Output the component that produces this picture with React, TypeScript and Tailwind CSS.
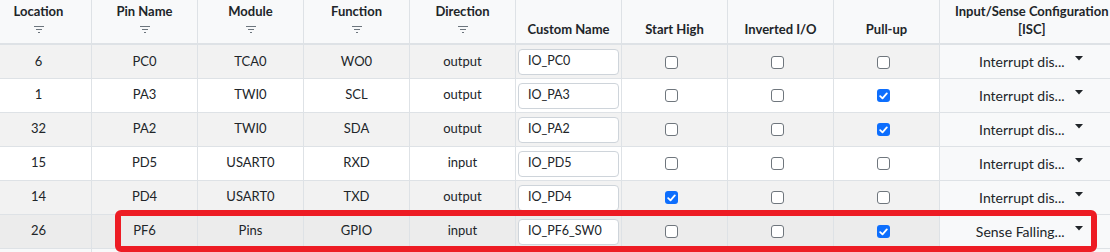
import { useState } from "react";

type Row = {
  loc: string;
  pin: string;
  mod: string;
  fn: string;
  dir: string;
  name: string;
  high: boolean;
  inv: boolean;
  pull: boolean;
  isc: string;
};

const rows: Row[] = [
  { loc: "6", pin: "PC0", mod: "TCA0", fn: "WO0", dir: "output", name: "IO_PC0", high: false, inv: false, pull: false, isc: "Interrupt dis..." },
  { loc: "1", pin: "PA3", mod: "TWI0", fn: "SCL", dir: "output", name: "IO_PA3", high: false, inv: false, pull: true, isc: "Interrupt dis..." },
  { loc: "32", pin: "PA2", mod: "TWI0", fn: "SDA", dir: "output", name: "IO_PA2", high: false, inv: false, pull: true, isc: "Interrupt dis..." },
  { loc: "15", pin: "PD5", mod: "USART0", fn: "RXD", dir: "input", name: "IO_PD5", high: false, inv: false, pull: false, isc: "Interrupt dis..." },
  { loc: "14", pin: "PD4", mod: "USART0", fn: "TXD", dir: "output", name: "IO_PD4", high: true, inv: false, pull: false, isc: "Interrupt dis..." },
  { loc: "26", pin: "PF6", mod: "Pins", fn: "GPIO", dir: "input", name: "IO_PF6_SW0", high: false, inv: false, pull: true, isc: "Sense Falling..." },
];

function FilterIcon() {
  return (
    <div className="flex h-[18px] items-center justify-center">
      <svg width="10" height="7" viewBox="0 0 10 7">
        <rect x="0" y="0" width="10" height="1" fill="#6c757d" />
        <rect x="2" y="3" width="6" height="1" fill="#6c757d" />
        <rect x="4" y="6" width="2" height="1" fill="#6c757d" />
      </svg>
    </div>
  );
}

function Check({ on }: { on: boolean }) {
  return on ? (
    <span className="mr-[7px] inline-flex h-[13px] w-[13px] items-center justify-center rounded-[3px] bg-[#0d6efd] align-middle">
      <svg width="9" height="8" viewBox="0 0 9 8">
        <path d="M1.2 4.2 L3.5 6.4 L7.8 1.4" stroke="#fff" strokeWidth="1.8" fill="none" strokeLinecap="round" strokeLinejoin="round" />
      </svg>
    </span>
  ) : (
    <span className="mr-[7px] inline-block h-[13px] w-[13px] rounded-[3px] border border-[#6f767d] bg-white align-middle" />
  );
}

const heads: { label: string[]; filter: boolean }[] = [
  { label: ["Location"], filter: true },
  { label: ["Pin Name"], filter: true },
  { label: ["Module"], filter: true },
  { label: ["Function"], filter: true },
  { label: ["Direction"], filter: true },
  { label: ["Custom Name"], filter: false },
  { label: ["Start High"], filter: false },
  { label: ["Inverted I/O"], filter: false },
  { label: ["Pull-up"], filter: false },
  { label: ["Input/Sense Configuration", "[ISC]"], filter: false },
];

export default function App() {
  const [data] = useState(rows);
  const cell = "border-l border-b border-[#dee2e6] text-center align-middle";

  return (
    <div
      className="relative h-[252px] w-[1110px] overflow-hidden bg-white text-[13px] text-[#212529]"
      style={{ fontFamily: 'Lato, "Noto Sans", sans-serif' }}
    >
      <table className="-ml-[15px] w-[1138px] table-fixed border-collapse">
        <colgroup>
          {[106, 106, 106, 106, 106, 106, 106, 106, 106, 184].map((w, i) => (
            <col key={i} style={{ width: w }} />
          ))}
        </colgroup>
        <thead>
          <tr className="h-[44px] bg-[#f8f9fa]">
            {heads.map((h, i) => (
              <th
                key={i}
                className="border-l border-b-2 border-[#dee2e6] pb-[5px] align-bottom text-[13px] leading-[18px] font-bold"
              >
                {h.label.map((l) => (
                  <div key={l}>{l}</div>
                ))}
                {h.filter && <FilterIcon />}
              </th>
            ))}
          </tr>
        </thead>
        <tbody>
          {data.map((r, i) => (
            <tr
              key={r.loc}
              className={`h-[34px] ${i === 5 ? "bg-[#ececec]" : i % 2 === 0 ? "bg-[#f2f2f2]" : "bg-white"}`}
            >
              <td className={cell}>{r.loc}</td>
              <td className={cell}>{r.pin}</td>
              <td className={cell}>{r.mod}</td>
              <td className={cell}>{r.fn}</td>
              <td className={cell}>{r.dir}</td>
              <td className="border-l border-b border-[#dee2e6] px-[2px] pt-[1px] align-middle">
                <div className="flex h-[26px] items-center rounded-[4px] border border-[#ced4da] bg-white pl-[9px] text-[12.5px]">
                  {r.name}
                </div>
              </td>
              <td className={cell}>
                <Check on={r.high} />
              </td>
              <td className={cell}>
                <Check on={r.inv} />
              </td>
              <td className={cell}>
                <Check on={r.pull} />
              </td>
              <td className="border-l border-b border-[#dee2e6] bg-[#f8f9fa] align-middle">
                <div className="flex items-center justify-end pr-[41px] text-[14px]">
                  <span>{r.isc}</span>
                  <svg width="8" height="5" viewBox="0 0 8 5" className="ml-[10px] -mt-[6px]">
                    <path d="M0 0 H8 L4 4.5 Z" fill="#212529" />
                  </svg>
                </div>
              </td>
            </tr>
          ))}
          <tr className="h-[34px] bg-[#f8f9fa]">
            {heads.map((_, i) => (
              <td key={i} className="border-l border-[#dee2e6]" />
            ))}
          </tr>
        </tbody>
      </table>
      <div className="pointer-events-none absolute left-[115px] top-[210px] h-[42px] w-[982px] rounded-[6px] border-[6px] border-[#ed1c24]" />
    </div>
  );
}
